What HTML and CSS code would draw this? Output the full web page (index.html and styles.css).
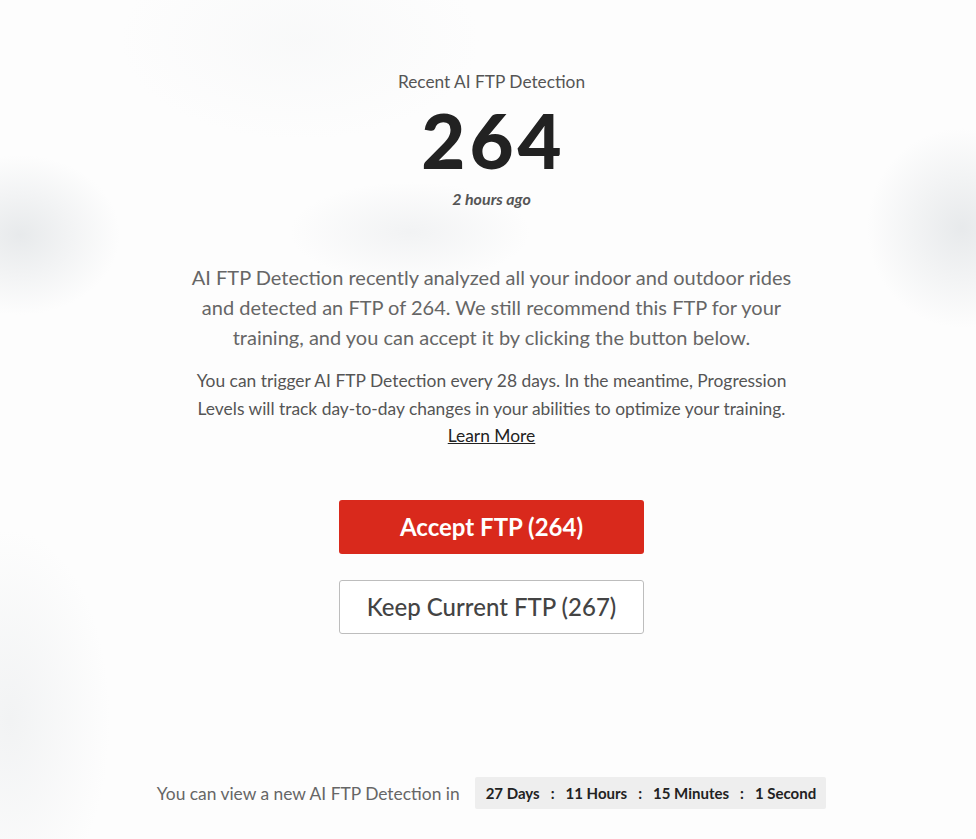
FILE: index.html
```html
<!DOCTYPE html>
<html lang="en">
<head>
<meta charset="utf-8">
<title>AI FTP Detection</title>
<link rel="stylesheet" href="styles.css">
</head>
<body>
<main class="page">
  <section class="result">
    <p class="result-label">Recent AI FTP Detection</p>
    <p class="result-value">264</p>
    <p class="result-time">2 hours ago</p>
  </section>
  <section class="explain">
    <p class="explain-lead">AI FTP Detection recently analyzed all your indoor and outdoor rides and detected an FTP of 264. We still recommend this FTP for your training, and you can accept it by clicking the button below.</p>
    <p class="explain-note">You can trigger AI FTP Detection every 28 days. In the meantime, Progression Levels will track day-to-day changes in your abilities to optimize your training.<br><a class="learn-more" href="#">Learn More</a></p>
  </section>
  <section class="actions">
    <button class="btn btn-primary" type="button">Accept FTP (264)</button>
    <button class="btn btn-secondary" type="button">Keep Current FTP (267)</button>
  </section>
  <footer class="countdown">
    <span class="countdown-label">You can view a new AI FTP Detection in</span>
    <span class="countdown-timer">
      <span>27 Days</span><span class="sep">:</span><span>11 Hours</span><span class="sep">:</span><span>15 Minutes</span><span class="sep">:</span><span>1 Second</span>
    </span>
  </footer>
</main>
</body>
</html>
```
FILE: styles.css
```css
html, body {
  margin: 0;
  padding: 0;
  height: 100%;
}
body {
  font-family: "Lato", "Liberation Sans", sans-serif;
  color: #555;
  background-color: #fdfdfd;
  background-image:
    radial-gradient(ellipse 100px 80px at 20px 235px, rgba(205,210,214,0.45), rgba(205,210,214,0) 100%),
    radial-gradient(ellipse 120px 50px at 410px 232px, rgba(212,216,220,0.28), rgba(212,216,220,0) 100%),
    radial-gradient(ellipse 95px 100px at 962px 228px, rgba(205,210,214,0.45), rgba(205,210,214,0) 100%),
    radial-gradient(ellipse 100px 190px at 10px 720px, rgba(225,228,230,0.4), rgba(225,228,230,0) 100%),
    radial-gradient(ellipse 180px 100px at 300px 40px, rgba(238,240,241,0.3), rgba(238,240,241,0) 100%);
  background-repeat: no-repeat;
}
.page {
  display: flex;
  flex-direction: column;
  align-items: center;
  min-height: 839px;
  box-sizing: border-box;
  padding-top: 72px;
  padding-left: 7px;
}
p { margin: 0; }
.result {
  display: flex;
  flex-direction: column;
  align-items: center;
}
.result-label {
  font-size: 17.3px;
  line-height: 20px;
  color: #555;
}
.result-value {
  font-size: 76px;
  font-weight: 900;
  line-height: 76px;
  color: #222;
  letter-spacing: 4px;
  padding-left: 4px;
  margin-top: 10px;
}
.result-time {
  font-size: 16px;
  line-height: 18px;
  font-weight: 700;
  font-style: italic;
  color: #555;
  margin-top: 12px;
}
.explain {
  width: 612px;
  text-align: center;
  margin-top: 54px;
}
.explain-lead {
  font-size: 20px;
  line-height: 30px;
  color: #666;
}
.explain-note {
  font-size: 17.4px;
  line-height: 27.5px;
  color: #555;
  margin-top: 15px;
}
.learn-more {
  color: #222;
  text-decoration: underline;
}
.actions {
  display: flex;
  flex-direction: column;
  gap: 26px;
  margin-top: 50px;
}
.btn {
  width: 305px;
  height: 54px;
  border-radius: 3px;
  font-family: inherit;
  font-size: 24px;
  cursor: pointer;
}
.btn-primary {
  background: #d9291c;
  border: 0;
  color: #fff;
  font-weight: 700;
}
.btn-secondary {
  background: #fff;
  border: 1px solid #bdbdbd;
  color: #444;
  font-weight: 500;
}
.countdown {
  display: flex;
  align-items: center;
  gap: 15px;
  margin-top: auto;
  margin-bottom: 30px;
}
.countdown-label {
  font-size: 17.4px;
  color: #666;
}
.countdown-timer {
  display: flex;
  align-items: center;
  gap: 11px;
  background: #eeeeee;
  border-radius: 2px;
  padding: 0 10px 0 11px;
  height: 32px;
  font-size: 15px;
  font-weight: 700;
  color: #222;
}
```
